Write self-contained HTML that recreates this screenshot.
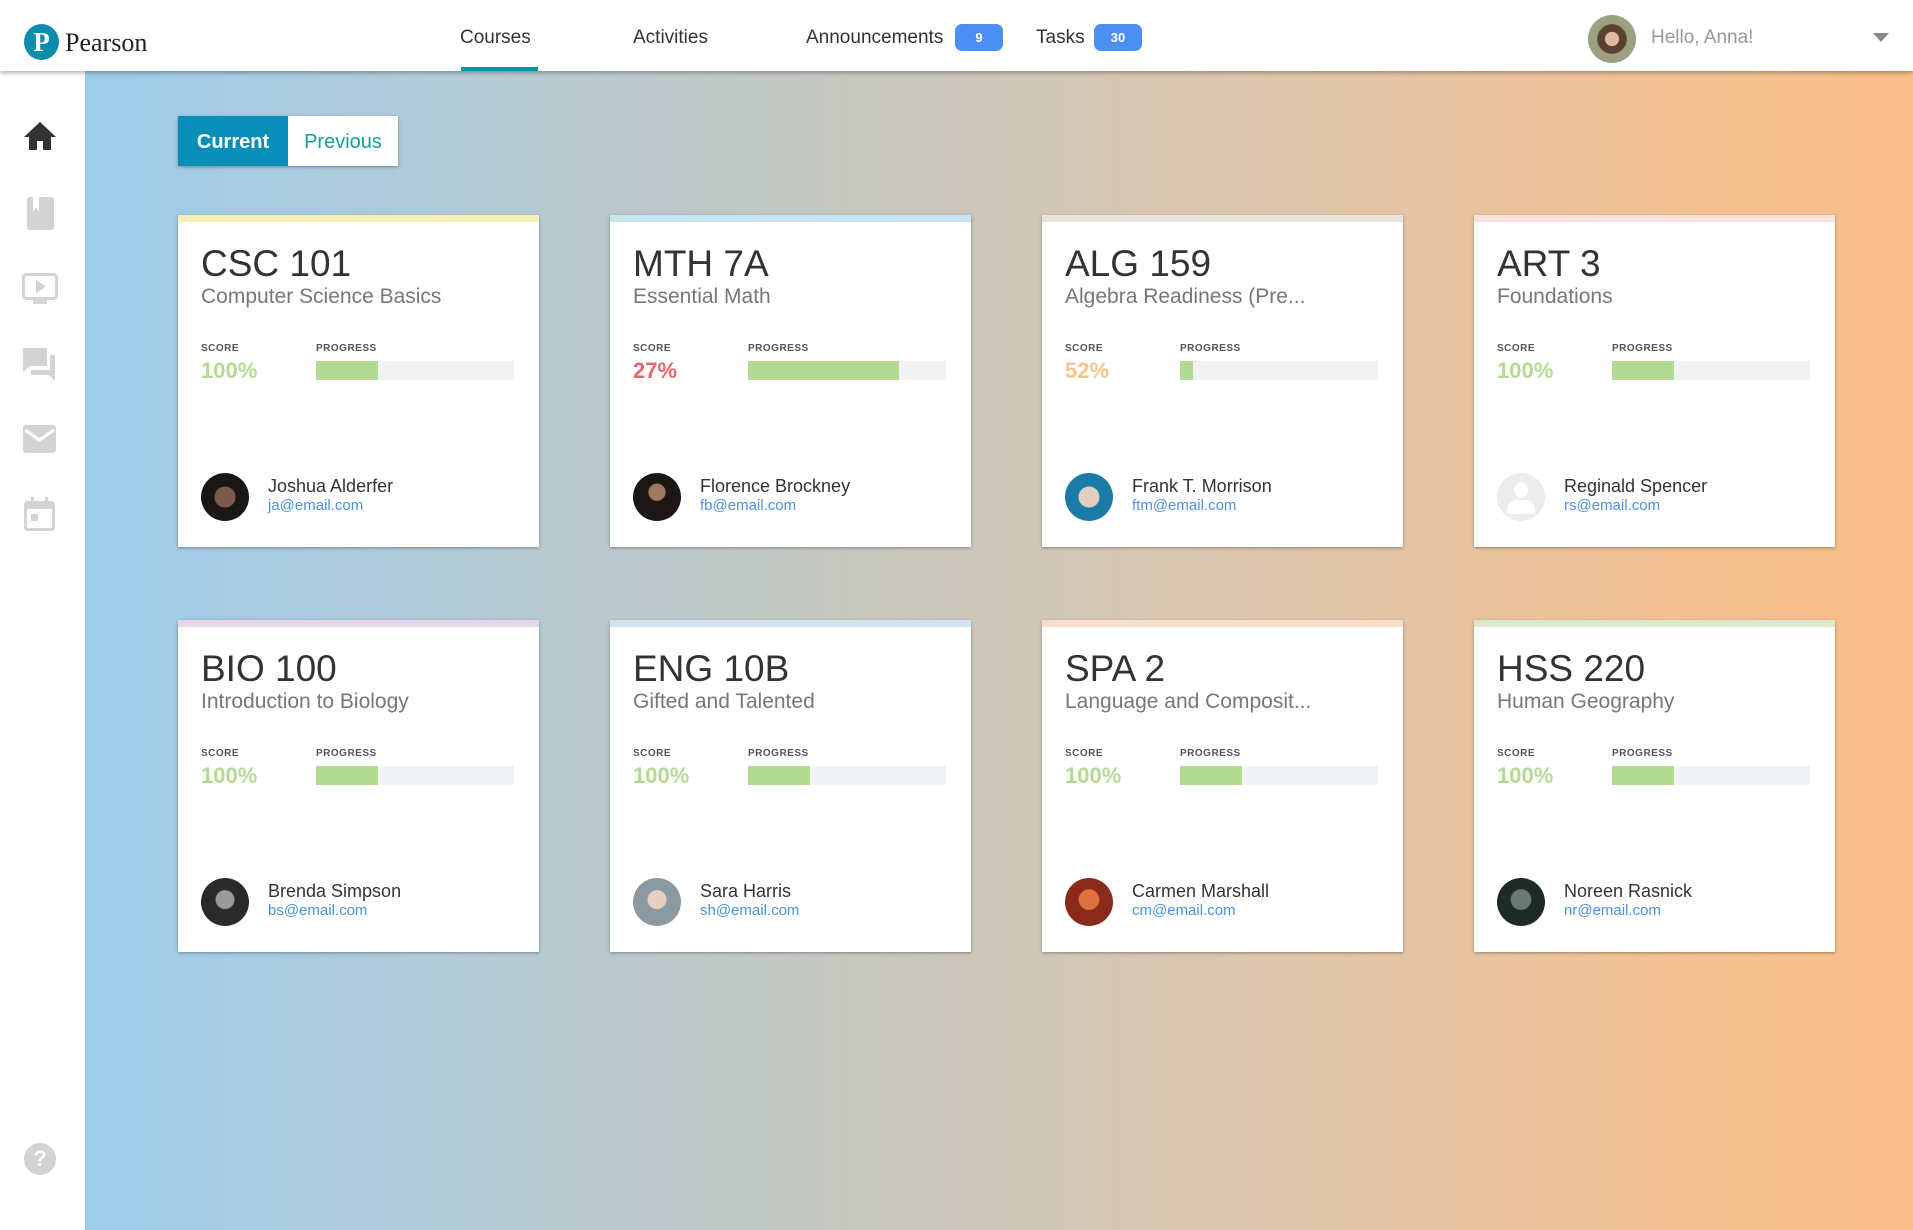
<!DOCTYPE html>
<html><head><meta charset="utf-8">
<style>
*{box-sizing:border-box;margin:0;padding:0}
body{width:1913px;height:1230px;overflow:hidden;font-family:"Liberation Sans",sans-serif;background:linear-gradient(90deg,#99cbec 0%,#a9cbe0 15%,#c2c8c4 40%,#dcc6ae 65%,#f3c092 88%,#f9be88 100%);position:relative}
.hdr{position:absolute;left:0;top:0;width:1913px;height:71px;background:#fff;box-shadow:0 2px 4px rgba(0,0,0,.3);z-index:3}
.side{position:absolute;left:0;top:71px;width:85px;height:1159px;background:#fff;z-index:2}
.nav{position:absolute;top:27px;font-size:19px;color:#333}
.badge{position:absolute;top:24px;height:27px;background:#4b8ff2;color:#fff;font-size:13px;font-weight:bold;border-radius:7px;text-align:center;line-height:27px}
.card{position:absolute;width:361px;height:332px;background:#fff;box-shadow:0 1px 3px rgba(0,0,0,.35)}
.strip{height:7px}
.t{position:absolute;left:23px;top:28px;font-size:37px;color:#333}
.s{position:absolute;left:23px;top:70px;font-size:21px;color:#777}
.lbl{position:absolute;top:128px;font-size:10px;font-weight:bold;color:#555;letter-spacing:.5px}
.sc{position:absolute;left:23px;top:143px;font-size:22px;font-weight:bold}
.bar{position:absolute;left:138px;top:146px;width:198px;height:19px;background:#f1f2f3}
.bar i{display:block;height:19px;background:#b3d993}
.av{position:absolute;left:23px;top:258px;width:48px;height:48px;border-radius:50%}
.nm{position:absolute;left:90px;top:261px;font-size:18px;color:#333}
.em{position:absolute;left:90px;top:282px;font-size:15px;color:#4a90e2}
</style></head><body>
<div class="hdr">
  <div style="position:absolute;left:24px;top:24px;width:35px;height:36px;border-radius:50%;background:#0e8cae;color:#fff;font:bold 27px 'Liberation Serif',serif;text-align:center;line-height:36px">P</div>
  <div style="position:absolute;left:65px;top:28px;font:26px 'Liberation Serif',serif;color:#222">Pearson</div>
  <div class="nav" style="left:460px">Courses</div>
  <div style="position:absolute;left:461px;top:67px;width:77px;height:4px;background:#0a8fb0"></div>
  <div class="nav" style="left:633px">Activities</div>
  <div class="nav" style="left:806px">Announcements</div>
  <div class="badge" style="left:955px;width:48px">9</div>
  <div class="nav" style="left:1036px">Tasks</div>
  <div class="badge" style="left:1094px;width:48px">30</div>
  <div style="position:absolute;left:1588px;top:15px;width:48px;height:48px;border-radius:50%;background:radial-gradient(circle at 50% 50%,#e2b8a0 0 20%,#5a4030 22% 42%,#9aa080 45%)"></div>
  <div style="position:absolute;left:1651px;top:27px;font-size:19px;color:#999">Hello, Anna!</div>
  <div style="position:absolute;left:1873px;top:33px;width:0;height:0;border-left:8px solid transparent;border-right:8px solid transparent;border-top:9px solid #888"></div>
</div>
<div class="side">
  <svg style="position:absolute;left:23px;top:50px" width="34" height="30" viewBox="0 0 34 30"><path d="M17 1L1 16h5v13h8v-9h6v9h8V16h5z" fill="#333"/></svg>
  <svg style="position:absolute;left:27px;top:126px" width="27" height="33" viewBox="0 0 27 33"><rect width="27" height="33" rx="3" fill="#d3d3d3"/><path d="M6 0h6v14l-3-3-3 3z" fill="#fff"/></svg>
  <svg style="position:absolute;left:22px;top:202px" width="36" height="32" viewBox="0 0 36 32"><rect x="1.5" y="1.5" width="33" height="24" rx="3" fill="none" stroke="#d3d3d3" stroke-width="3"/><path d="M14 7v13l10-6.5z" fill="#d3d3d3"/><rect x="11" y="26" width="14" height="5" fill="#d3d3d3"/></svg>
  <svg style="position:absolute;left:22px;top:276px" width="34" height="34" viewBox="0 0 34 34"><path d="M1 1h24v18H8l-7 6z" fill="#d3d3d3"/><path d="M28 8h5v26l-6-6H9v-5h19z" fill="#d3d3d3"/></svg>
  <svg style="position:absolute;left:23px;top:354px" width="33" height="28" viewBox="0 0 33 28"><rect width="33" height="28" rx="3" fill="#d3d3d3"/><path d="M2 5l14.5 10L31 5" fill="none" stroke="#fff" stroke-width="3"/></svg>
  <svg style="position:absolute;left:24px;top:426px" width="31" height="34" viewBox="0 0 31 34"><rect x="1.5" y="5.5" width="28" height="27" rx="2" fill="none" stroke="#d3d3d3" stroke-width="3"/><rect x="1" y="5" width="29" height="7" fill="#d3d3d3"/><rect x="7" y="0" width="3" height="8" fill="#d3d3d3"/><rect x="21" y="0" width="3" height="8" fill="#d3d3d3"/><rect x="7" y="17" width="7" height="7" fill="#d3d3d3"/></svg>
  <div style="position:absolute;left:24px;top:1072px;width:32px;height:32px;border-radius:50%;background:#d3d3d3;color:#fff;font:bold 22px 'Liberation Sans',sans-serif;text-align:center;line-height:32px">?</div>
</div>
<div style="position:absolute;left:178px;top:116px;width:220px;height:50px;background:#fff;box-shadow:0 1px 3px rgba(0,0,0,.35)">
  <div style="position:absolute;left:0;top:0;width:110px;height:50px;background:#0a8fb8;color:#fff;font-weight:bold;font-size:20px;text-align:center;line-height:52px">Current</div>
  <div style="position:absolute;left:110px;top:0;width:110px;height:50px;color:#11a09a;font-size:20px;text-align:center;line-height:52px">Previous</div>
</div>

<div class="card" style="left:178px;top:215px"><div class="strip" style="background:#f6f0b8"></div>
<div class="t">CSC 101</div><div class="s">Computer Science Basics</div>
<div class="lbl" style="left:23px">SCORE</div><div class="lbl" style="left:138px">PROGRESS</div>
<div class="sc" style="color:#b3d993">100%</div><div class="bar"><i style="width:62px"></i></div>
<div class="av" style="background:radial-gradient(circle at 50% 50%,#7a5a48 0 30%,#1a1614 32%)"></div><div class="nm">Joshua Alderfer</div><div class="em">ja@email.com</div></div>

<div class="card" style="left:610px;top:215px"><div class="strip" style="background:#c6e6ef"></div>
<div class="t">MTH 7A</div><div class="s">Essential Math</div>
<div class="lbl" style="left:23px">SCORE</div><div class="lbl" style="left:138px">PROGRESS</div>
<div class="sc" style="color:#e8646e">27%</div><div class="bar"><i style="width:151px"></i></div>
<div class="av" style="background:radial-gradient(circle at 50% 40%,#a07860 0 22%,#1c1614 24%)"></div><div class="nm">Florence Brockney</div><div class="em">fb@email.com</div></div>

<div class="card" style="left:1042px;top:215px"><div class="strip" style="background:#e9e5dc"></div>
<div class="t">ALG 159</div><div class="s">Algebra Readiness (Pre...</div>
<div class="lbl" style="left:23px">SCORE</div><div class="lbl" style="left:138px">PROGRESS</div>
<div class="sc" style="color:#f7c58a">52%</div><div class="bar"><i style="width:13px"></i></div>
<div class="av" style="background:radial-gradient(circle at 50% 50%,#e0d0c0 0 30%,#1a7aa8 32%)"></div><div class="nm">Frank T. Morrison</div><div class="em">ftm@email.com</div></div>

<div class="card" style="left:1474px;top:215px"><div class="strip" style="background:#f8e0e0"></div>
<div class="t">ART 3</div><div class="s">Foundations</div>
<div class="lbl" style="left:23px">SCORE</div><div class="lbl" style="left:138px">PROGRESS</div>
<div class="sc" style="color:#b3d993">100%</div><div class="bar"><i style="width:62px"></i></div>
<div class="av" style="background:#ececec"><div style="position:absolute;left:17px;top:9px;width:14px;height:16px;border-radius:50%;background:#fff"></div><div style="position:absolute;left:10px;top:27px;width:28px;height:14px;border-radius:14px 14px 4px 4px;background:#fff"></div></div><div class="nm">Reginald Spencer</div><div class="em">rs@email.com</div></div>

<div class="card" style="left:178px;top:620px"><div class="strip" style="background:#e5d6ea"></div>
<div class="t">BIO 100</div><div class="s">Introduction to Biology</div>
<div class="lbl" style="left:23px">SCORE</div><div class="lbl" style="left:138px">PROGRESS</div>
<div class="sc" style="color:#b3d993">100%</div><div class="bar"><i style="width:62px"></i></div>
<div class="av" style="background:radial-gradient(circle at 50% 45%,#9a9a9a 0 25%,#2a2a2a 28%)"></div><div class="nm">Brenda Simpson</div><div class="em">bs@email.com</div></div>

<div class="card" style="left:610px;top:620px"><div class="strip" style="background:#d3e2ef"></div>
<div class="t">ENG 10B</div><div class="s">Gifted and Talented</div>
<div class="lbl" style="left:23px">SCORE</div><div class="lbl" style="left:138px">PROGRESS</div>
<div class="sc" style="color:#b3d993">100%</div><div class="bar"><i style="width:62px"></i></div>
<div class="av" style="background:radial-gradient(circle at 50% 45%,#e8d0c0 0 25%,#8a9aa0 28%)"></div><div class="nm">Sara Harris</div><div class="em">sh@email.com</div></div>

<div class="card" style="left:1042px;top:620px"><div class="strip" style="background:#f8ddc8"></div>
<div class="t">SPA 2</div><div class="s">Language and Composit...</div>
<div class="lbl" style="left:23px">SCORE</div><div class="lbl" style="left:138px">PROGRESS</div>
<div class="sc" style="color:#b3d993">100%</div><div class="bar"><i style="width:62px"></i></div>
<div class="av" style="background:radial-gradient(circle at 50% 45%,#e07040 0 28%,#8a2a1a 30%)"></div><div class="nm">Carmen Marshall</div><div class="em">cm@email.com</div></div>

<div class="card" style="left:1474px;top:620px"><div class="strip" style="background:#dbe8cc"></div>
<div class="t">HSS 220</div><div class="s">Human Geography</div>
<div class="lbl" style="left:23px">SCORE</div><div class="lbl" style="left:138px">PROGRESS</div>
<div class="sc" style="color:#b3d993">100%</div><div class="bar"><i style="width:62px"></i></div>
<div class="av" style="background:radial-gradient(circle at 50% 45%,#6a7a70 0 28%,#1e2a28 30%)"></div><div class="nm">Noreen Rasnick</div><div class="em">nr@email.com</div></div>
</body></html>
